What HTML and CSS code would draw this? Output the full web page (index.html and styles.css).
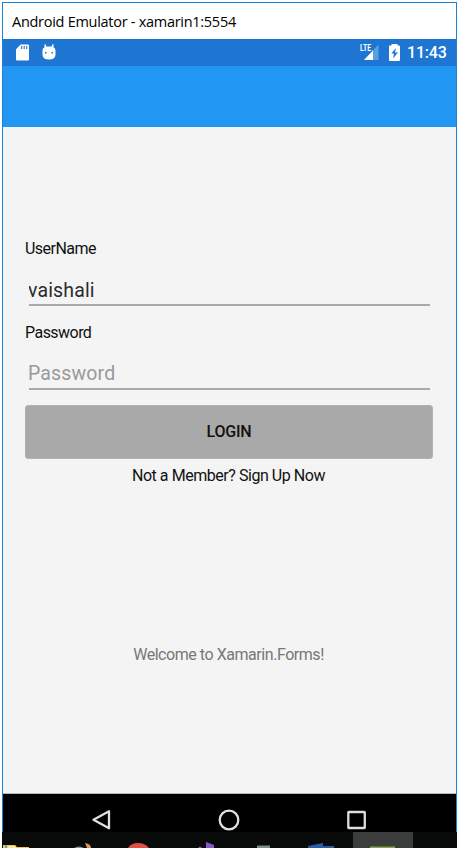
FILE: index.html
```html
<!DOCTYPE html>
<html lang="en">
<head>
<meta charset="utf-8">
<title>Android Emulator</title>
<link rel="stylesheet" href="styles.css">
</head>
<body>
<div class="window">
  <header class="titlebar"><span>Android Emulator - xamarin1:5554</span></header>
  <div class="status">
    <svg class="sd" width="13" height="17" viewBox="0 0 13 17"><path fill="#fff" d="M4.6.5H12q1 0 1 1V15.500q0 1-1 1H1q-1 0-1-1V5.200z"/><path stroke="#1e76d2" stroke-width="1.100" d="M5.700 2v3M8.200 2v3M10.700 2v3"/></svg>
    <svg class="bot" width="14" height="17" viewBox="0 0 14 17"><path fill="#fff" d="M.5 6.500Q.5 4 2.500 3.300V.3H3.600L4.300 2.600H9.700L10.400.3H11.500V3.300Q13.500 4 13.500 6.500V11Q13 15.500 7 15.500T.5 11z"/><path fill="#1e76d2" d="M3 8h1.600v1.600H3zM9.400 8H11v1.600H9.400z"/></svg>
    <svg class="signal" width="19" height="17" viewBox="0 0 19 17"><path fill="#5c9fe0" d="M18.500.5V16H4z"/><path fill="#fff" d="M13 6.500V16H4z"/><path fill="none" stroke="#1e76d2" stroke-width="8" d="M0 4h11.500"/><text x="0" y="7" textLength="11" lengthAdjust="spacingAndGlyphs">LTE</text></svg>
    <svg class="battery" width="11" height="17" viewBox="0 0 11 17"><path fill="#fff" d="M2.500 0h6v1.500H10q1 0 1 1V16q0 1-1 1H1q-1 0-1-1V2.500q0-1 1-1h1.500z"/><path fill="#1e76d2" d="M7 4 2.300 9.500H5L4 14.500 9 8.500H6z"/></svg>
    <time>11:43</time>
  </div>
  <div class="toolbar"></div>
  <main class="content">
    <label class="label user-label" for="user"><span>UserName</span></label>
    <input class="field" id="user" value="vaishali">
    <label class="label pass-label" for="pass"><span>Password</span></label>
    <input class="field pass" id="pass" placeholder="Password">
    <button class="login">LOGIN</button>
    <p class="signup"><span>Not a Member? Sign Up Now</span></p>
    <p class="welcome"><span>Welcome to Xamarin.Forms!</span></p>
  </main>
  <nav class="nav">
    <svg width="22" height="22" viewBox="0 0 22 22"><path d="M19 2.200V19.300L3.500 10.800z"/></svg>
    <svg width="22" height="22" viewBox="0 0 22 22"><circle cx="11" cy="11" r="9.300"/></svg>
    <svg width="22" height="22" viewBox="0 0 22 22"><rect x="3.300" y="3" width="16.500" height="16" rx=".5"/></svg>
  </nav>
</div>
<svg class="taskbar" width="455" height="16" viewBox="2 832 455 16">
  <path fill="#090b0b" d="M2 832h455v16H2z"/>
  <path fill="#3b3c3c" d="M353 832h60v16h-60z"/>
  <path fill="#f5c744" d="M3 848v-3h12l2 2h12v1z"/><path fill="#ffe69a" d="M8 846h8v2H8z"/><path fill="#3bb8d8" d="M5 845h2v3H5z"/>
  <path fill="#799bb0" d="M74 848q5-3 10 0z"/><path fill="#d79c55" d="M85 843q6 1 6 5h-4z"/>
  <path fill="#df4f42" d="M128 848q3-5 10-5t11 5z"/>
  <path fill="#8859c5" d="M198 848q2-3 4 0zM206 842l8 3v3h-8z"/>
  <path fill="#78908a" d="M257 846h13v2h-13z"/><path fill="#424645" d="M257 845h13v1h-13z"/>
  <path fill="#2c5ba8" d="M308 846l15-3v3h11v2h-26z"/>
  <path fill="#82a744" d="M370 846.500h25v1.500h-25z"/>
</svg>
</body>
</html>
```
FILE: styles.css
```css
* { box-sizing: border-box; }
body { margin: 0; padding: 2px 0 0 2px; background: #fff; font-family: Roboto, sans-serif; color: #111; }
.window { width: 455px; height: 830px; border: 1px solid #1883d7; border-bottom: 0; display: flex; flex-direction: column; background: #f4f4f4; }
.titlebar { height: 36px; background: #fff; padding: 1px 0 0 9px; font: 14.5px/36px "Open Sans", sans-serif; color: #000; white-space: nowrap; letter-spacing: -.28px; }
.status { height: 27px; background: #1e76d2; display: flex; align-items: center; padding: 0 10px 0 13px; color: #fff; }
.bot { margin-left: 13px; }
.signal { margin-left: auto; }
.signal text { font: bold 9px Roboto, sans-serif; fill: #fff; }
.battery { margin-left: 10px; }
.status time { margin-left: 7px; font-size: 16px; font-weight: 500; line-height: 27px; width: 39px; white-space: nowrap; letter-spacing: -.2px; }
.toolbar { height: 61px; background: #2196f3; }
.content { flex: 1; display: flex; flex-direction: column; padding: 0 23px 0 22px; border-bottom: 1px solid #b8b8b8; }
.label { font-size: 16px; line-height: 20px; height: 20px; letter-spacing: -.54px; }
.user-label { margin-top: 112px; }
.field { height: 30px; margin: 17px 3px 0 4px; padding: 0; border: 0; border-bottom: 2px solid #aaa; border-radius: 0; background: transparent; outline: 0; font: 19.5px/28px Roboto, sans-serif; color: #2b2b2b; text-indent: -1px; letter-spacing: .15px; }
.pass { padding-bottom: 1px; }
.field::placeholder { color: #999; opacity: 1; }
.pass-label { margin-top: 17px; }
.login { height: 54px; margin-top: 15px; border: 1px solid #b2b2b2; border-radius: 3px; background: #a9a9a9; font: 500 16px/52px Roboto, sans-serif; letter-spacing: -.2px; color: #111; padding: 0; }
.signup, .welcome { margin: 0; padding-right: 1px; text-align: center; font-size: 16px; line-height: 20px; white-space: nowrap; letter-spacing: -.45px; }
.signup { margin-top: 7px; }
.welcome { margin-top: 159px; color: #777; }
.nav { height: 38px; background: #000; display: flex; justify-content: space-between; padding: 15px 89px 0 87px; }
.nav svg { fill: none; stroke: #dedede; stroke-width: 2.3; stroke-linejoin: round; }
.taskbar { display: block; }
```
